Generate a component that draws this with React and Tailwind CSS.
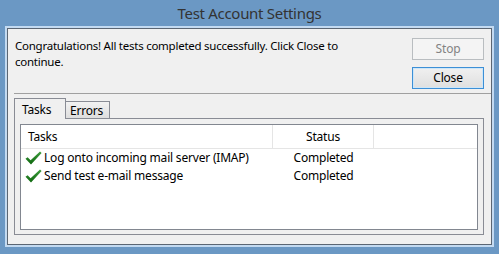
import React from 'react'

const rows = [
  { task: 'Log onto incoming mail server (IMAP)', status: 'Completed' },
  { task: 'Send test e-mail message', status: 'Completed' },
]

function Check() {
  return (
    <svg width="17" height="14" viewBox="0 0 17 14" className="shrink-0">
      <defs>
        <linearGradient id="chk" x1="0" y1="0" x2="0" y2="1">
          <stop offset="0" stopColor="#3f9e3f" />
          <stop offset="1" stopColor="#0c650c" />
        </linearGradient>
      </defs>
      <path d="M0.5 7.8 L2.6 6.2 L5.6 9.2 L15 0.4 L16.6 1.9 L6 13.6 Z" fill="url(#chk)" />
    </svg>
  )
}

export default function App() {
  return (
    <div className="w-[499px] h-[254px] bg-[#6b98c4] flex flex-col font-['Noto_Sans',sans-serif] text-[12px] tracking-[-0.2px] text-black">
      {/* Title bar */}
      <div className="h-[26px] flex items-center justify-center text-[15px] text-[#333] tracking-[-0.3px]">
        Test Account Settings
      </div>

      {/* Client frame */}
      <div className="flex-1 mx-[5px] mb-[7px] border-2 border-[#c3daf1] flex">
        <div className="flex-1 border border-[#5b6673] bg-[#f0f0f0] flex flex-col">
          {/* Message + buttons */}
          <div className="h-[64px] flex justify-between">
            <div className="pl-[7px] pt-[9px] text-[11.5px] leading-[16px] tracking-[-0.25px]">
              <div>Congratulations! All tests completed successfully. Click Close to</div>
              <div>continue.</div>
            </div>
            <div className="pt-[9px] pr-[7px] flex flex-col gap-[7px]">
              <button className="w-[72px] h-[22px] border border-[#b9bdc0] bg-[#f4f4f4] text-[#838383] leading-none">
                Stop
              </button>
              <button className="w-[72px] h-[22px] border border-[#3c8fd6] bg-linear-to-b from-[#f0f0f0] to-[#dfdfdf] shadow-[inset_0_0_0_1px_#cde6f8] leading-none">
                Close
              </button>
            </div>
          </div>

          {/* Separator */}
          <div className="h-px ml-[6px] bg-[#a0a0a0]" />

          {/* Tabs */}
          <div className="mt-[4px] ml-[6px] h-[21px] -mb-px flex items-end">
            <div className="relative z-10 w-[52px] h-[21px] border-t border-l border-r border-[#898c95] bg-[#f0f0f0] pl-[7px] pt-[2px]">
              Tasks
            </div>
            <div className="w-[44px] h-[17px] mb-px border-t border-r border-[#898c95] bg-linear-to-b from-[#f2f2f2] to-[#dedede] pl-[4px] leading-[17px]">
              Errors
            </div>
          </div>

          {/* Tab panel */}
          <div className="ml-[6px] w-[470px] h-[117px] border border-[#898c95] pt-[5px] px-[5px] pb-[4px] flex">
            <div className="flex-1 border border-[#828790] bg-white flex flex-col">
              <div className="h-[24px] border-b border-[#e5e5e5] flex">
                <div className="w-[252px] border-r border-[#e5e5e5] pl-[7px] flex items-center">Tasks</div>
                <div className="w-[101px] border-r border-[#e5e5e5] flex items-center justify-center">Status</div>
              </div>
              {rows.map((r) => (
                <div key={r.task} className="h-[18px] flex items-center">
                  <div className="w-[252px] pl-[4px] flex items-center gap-[2px]">
                    <Check />
                    <span>{r.task}</span>
                  </div>
                  <div className="w-[101px] text-center">{r.status}</div>
                </div>
              ))}
            </div>
          </div>
        </div>
      </div>
    </div>
  )
}
